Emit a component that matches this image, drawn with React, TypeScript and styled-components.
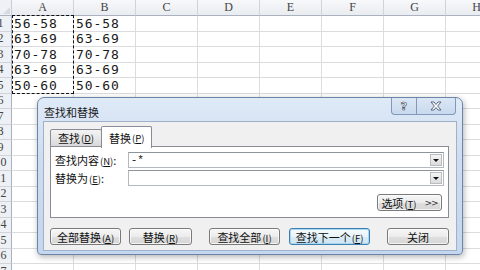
import React from 'react';
import styled, { createGlobalStyle } from 'styled-components';

const GlobalStyle = createGlobalStyle`
  html, body {
    margin: 0;
    padding: 0;
    background: #ffffff;
    overflow: hidden;
  }
  body {
    width: 480px;
    height: 270px;
  }
`;

const CJK = `"Noto Sans CJK SC", "Noto Sans", sans-serif`;

const Sheet = styled.div`
  position: relative;
  width: 480px;
  height: 270px;
  overflow: hidden;
  display: grid;
  grid-template-columns: 12px repeat(8, 62px);
  grid-template-rows: 16px repeat(17, 15.5px);
  background: #ffffff;
`;

const Corner = styled.div`
  position: relative;
  background: #eef1f5;
  border-right: 1px solid #c9ced6;
  border-bottom: 1px solid #aab2bd;
  box-sizing: border-box;

  &::after {
    content: '';
    position: absolute;
    right: 1px;
    bottom: 1px;
    border-left: 7px solid transparent;
    border-bottom: 7px solid #d6dbe2;
  }
`;

const ColHead = styled.div`
  display: flex;
  align-items: center;
  justify-content: center;
  box-sizing: border-box;
  background: linear-gradient(180deg, #f7f8fa 0%, #e9ecf0 100%);
  border-right: 1px solid #d0d4da;
  border-bottom: 1px solid #aab2bd;
  font-family: "Liberation Serif", serif;
  font-size: 12px;
  color: #444444;
`;

const RowHead = styled.div`
  display: flex;
  justify-content: flex-end;
  align-items: center;
  overflow: hidden;
  box-sizing: border-box;
  background: #edf0f4;
  border-right: 1px solid #aab2bd;
  border-bottom: 1px solid #d0d4da;
  font-family: "Liberation Serif", serif;
  font-size: 12px;
  color: #444444;
`;

const RowNum = styled.span`
  flex-shrink: 0;
  width: 21px;
  text-align: center;
`;

const Cell = styled.div`
  display: flex;
  align-items: center;
  box-sizing: border-box;
  padding-left: 2px;
  border-right: 1px solid #dadcdf;
  border-bottom: 1px solid #dadcdf;
  font-family: "DejaVu Sans Mono", monospace;
  font-size: 13px;
  letter-spacing: 0.9px;
  color: #1a1a1a;
  white-space: nowrap;
  overflow: hidden;
`;

const Marquee = styled.div`
  position: absolute;
  left: 12px;
  top: 15px;
  width: 62px;
  height: 79px;
  box-sizing: border-box;
  border: 1.5px dashed #111111;
  pointer-events: none;
`;

/* dialog window */

const Dialog = styled.div`
  position: absolute;
  left: 37px;
  top: 97px;
  width: 426px;
  height: 158px;
  box-sizing: border-box;
  display: flex;
  flex-direction: column;
  padding: 0 5px 3px 5px;
  border: 1px solid #6c86a8;
  border-radius: 7px 7px 4px 4px;
  background: linear-gradient(180deg, #dfeaf7 0%, #cddcf0 40%, #c5d7ee 100%);
  box-shadow: 1px 2px 6px rgba(0, 0, 0, 0.3);
`;

const TitleBar = styled.div`
  height: 23px;
  display: flex;
  justify-content: space-between;
  align-items: flex-start;
`;

const Title = styled.span`
  margin: 6px 0 0 1px;
  font-family: ${CJK};
  font-size: 11px;
  color: #1b1b1b;
`;

const CaptionGroup = styled.div`
  display: flex;
  margin-right: 1px;
  height: 16px;
  border: 1px solid #8198b8;
  border-top: none;
  border-radius: 0 0 4px 4px;
  overflow: hidden;
  background: linear-gradient(180deg, #dce7f5 0%, #c8d9ee 100%);
`;

const CaptionButton = styled.div<{ $w: number }>`
  width: ${p => p.$w}px;
  display: flex;
  align-items: center;
  justify-content: center;
  & + & {
    border-left: 1px solid #8198b8;
  }
`;

const HelpGlyph = styled.span`
  font-family: "DejaVu Sans", sans-serif;
  font-size: 11px;
  font-weight: bold;
  color: #ffffff;
  -webkit-text-stroke: 0.7px #4c5a70;
  line-height: 1;
`;

const Client = styled.div`
  flex: 1;
  box-sizing: border-box;
  background: #f0f0f0;
  border: 1px solid #9fb1ca;
  padding: 4px 7px 0 6px;
  display: flex;
  flex-direction: column;
`;

const TabStrip = styled.div`
  display: flex;
  align-items: flex-end;
  height: 21px;
  position: relative;
  z-index: 1;
`;

const Tab = styled.div<{ $active?: boolean }>`
  box-sizing: border-box;
  height: ${p => (p.$active ? 22 : 18)}px;
  margin-bottom: ${p => (p.$active ? -1 : 0)}px;
  padding: 0 7px;
  display: flex;
  align-items: center;
  font-family: ${CJK};
  font-size: 11px;
  color: #111;
  border: 1px solid #898c95;
  border-bottom: ${p => (p.$active ? 'none' : '1px solid #898c95')};
  border-radius: 2px 2px 0 0;
  background: ${p =>
    p.$active ? '#ffffff' : 'linear-gradient(180deg, #f3f3f3 0%, #e6e6e6 55%, #d9d9d9 100%)'};
  & + & {
    margin-left: -1px;
  }
`;

const Key = styled.span`
  font-size: 9.5px;
  margin-left: 1px;
  & u {
    text-decoration-thickness: 1px;
  }
`;

const Panel = styled.div`
  box-sizing: border-box;
  height: 72px;
  margin-top: -1px;
  background: #ffffff;
  border: 1px solid #898c95;
  padding: 5px 4px 0 4px;
  display: flex;
  flex-direction: column;
  gap: 2px;
`;

const FieldRow = styled.div`
  display: flex;
  align-items: center;
  height: 16px;
`;

const Label = styled.span`
  width: 73px;
  font-family: ${CJK};
  font-size: 11px;
  color: #111;
  white-space: nowrap;
`;

const Combo = styled.div`
  box-sizing: border-box;
  width: 318px;
  height: 16px;
  display: flex;
  align-items: center;
  justify-content: space-between;
  border: 1px solid #b4b9c1;
  border-top-color: #8e949c;
  background: #ffffff;
  padding: 0 1px 0 2px;
`;

const ComboText = styled.span`
  font-family: "Liberation Mono", monospace;
  font-size: 11px;
  color: #111;
`;

const DropButton = styled.div`
  width: 12px;
  height: 12px;
  box-sizing: border-box;
  border: 1px solid #b9bcc1;
  background: linear-gradient(180deg, #f4f4f4 0%, #dcdcdc 100%);
  display: flex;
  align-items: center;
  justify-content: center;

  &::after {
    content: '';
    border-left: 3px solid transparent;
    border-right: 3px solid transparent;
    border-top: 3px solid #111;
    margin-top: 1px;
  }
`;

const OptionsRow = styled.div`
  display: flex;
  justify-content: flex-end;
  margin-top: 6px;
  padding-right: 2px;
`;

const Button = styled.button<{ $w: number; $gap?: number; $focus?: boolean }>`
  box-sizing: border-box;
  width: ${p => p.$w}px;
  height: 17px;
  margin: 0 0 0 ${p => p.$gap ?? 0}px;
  padding: 0;
  display: flex;
  align-items: center;
  justify-content: center;
  font-family: ${CJK};
  font-size: 11px;
  color: #111;
  border: 1px solid ${p => (p.$focus ? '#3c7fb1' : '#7a7a7a')};
  border-radius: 3px;
  background: ${p =>
    p.$focus
      ? 'linear-gradient(180deg, #f6fbfe 0%, #e8f3fa 50%, #d9ebf6 51%, #cfe4f2 100%)'
      : 'linear-gradient(180deg, #f6f6f6 0%, #ececec 50%, #dfdfdf 51%, #d6d6d6 100%)'};
  box-shadow: inset 0 0 0 1px ${p => (p.$focus ? '#a9d6f3' : 'rgba(255,255,255,0.7)')};
`;

const Chevrons = styled.span`
  margin-left: 8px;
  font-family: "DejaVu Sans", sans-serif;
  font-size: 9px;
  color: #333;
  letter-spacing: -1px;
`;

const ButtonRow = styled.div`
  display: flex;
  margin-top: 10px;
`;

function K({ k }: { k: string }) {
  return (
    <Key>
      (<u>{k}</u>)
    </Key>
  );
}

const columns = ['A', 'B', 'C', 'D', 'E', 'F', 'G', 'H'];
const values = ['56-58', '63-69', '70-78', '63-69', '50-60'];

export default function App() {
  const rows = Array.from({ length: 17 }, (_, i) => i + 1);

  return (
    <>
      <GlobalStyle />
      <Sheet>
        <Corner />
        {columns.map(c => (
          <ColHead key={c}>{c}</ColHead>
        ))}
        {rows.map(r => (
          <React.Fragment key={r}>
            <RowHead>
              <RowNum>{r}</RowNum>
            </RowHead>
            {columns.map((c, ci) => (
              <Cell key={c}>{ci < 2 && r <= 5 ? values[r - 1] : ''}</Cell>
            ))}
          </React.Fragment>
        ))}

        <Marquee />

        <Dialog>
          <TitleBar>
            <Title>查找和替换</Title>
            <CaptionGroup>
              <CaptionButton $w={24}>
                <HelpGlyph>?</HelpGlyph>
              </CaptionButton>
              <CaptionButton $w={38}>
                <svg width="12" height="10" viewBox="0 0 12 10">
                  <path
                    d="M1 1 H4 L6 3.5 L8 1 H11 L7.6 5 L11 9 H8 L6 6.5 L4 9 H1 L4.4 5 Z"
                    fill="#ffffff"
                    stroke="#4c5a70"
                    strokeWidth="0.9"
                    strokeLinejoin="round"
                  />
                </svg>
              </CaptionButton>
            </CaptionGroup>
          </TitleBar>

          <Client>
            <TabStrip>
              <Tab>
                查找<K k="D" />
              </Tab>
              <Tab $active>
                替换<K k="P" />
              </Tab>
            </TabStrip>

            <Panel>
              <FieldRow>
                <Label>
                  查找内容<K k="N" />:
                </Label>
                <Combo>
                  <ComboText>-*</ComboText>
                  <DropButton />
                </Combo>
              </FieldRow>
              <FieldRow>
                <Label>
                  替换为<K k="E" />:
                </Label>
                <Combo>
                  <ComboText />
                  <DropButton />
                </Combo>
              </FieldRow>
              <OptionsRow>
                <Button $w={65}>
                  <span>
                    选项<K k="T" />
                  </span>
                  <Chevrons>&gt;&gt;</Chevrons>
                </Button>
              </OptionsRow>
            </Panel>

            <ButtonRow>
              <Button $w={71}>
                <span>
                  全部替换<K k="A" />
                </span>
              </Button>
              <Button $w={63} $gap={8}>
                <span>
                  替换<K k="R" />
                </span>
              </Button>
              <Button $w={71} $gap={17}>
                <span>
                  查找全部<K k="I" />
                </span>
              </Button>
              <Button $w={81} $gap={9} $focus>
                <span>
                  查找下一个<K k="F" />
                </span>
              </Button>
              <Button $w={62} $gap={17}>
                <span>关闭</span>
              </Button>
            </ButtonRow>
          </Client>
        </Dialog>
      </Sheet>
    </>
  );
}
